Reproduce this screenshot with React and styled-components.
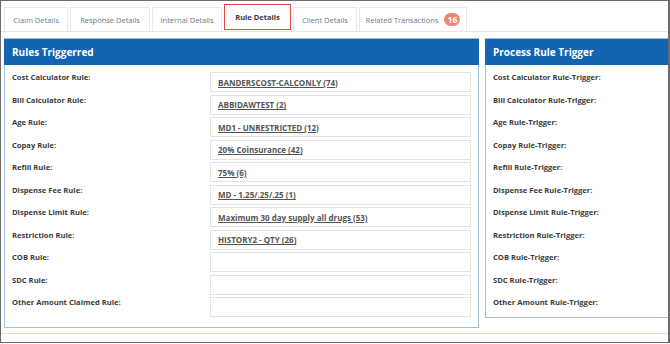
import React from "react";
import styled, { createGlobalStyle } from "styled-components";

const rules = [
  { label: "Cost Calculator Rule:", value: "BANDERSCOST-CALCONLY (74)" },
  { label: "Bill Calculator Rule:", value: "ABBIDAWTEST (2)" },
  { label: "Age Rule:", value: "MD1 - UNRESTRICTED (12)" },
  { label: "Copay Rule:", value: "20% Coinsurance (42)" },
  { label: "Refill Rule:", value: "75% (6)" },
  { label: "Dispense Fee Rule:", value: "MD - 1.25/.25/.25 (1)" },
  { label: "Dispense Limit Rule:", value: "Maximum 30 day supply all drugs (53)" },
  { label: "Restriction Rule:", value: "HISTORY2 - QTY (26)" },
  { label: "COB Rule:", value: "" },
  { label: "SDC Rule:", value: "" },
  { label: "Other Amount Claimed Rule:", value: "" },
];

const triggers = [
  "Cost Calculator Rule-Trigger:",
  "Bill Calculator Rule-Trigger:",
  "Age Rule-Trigger:",
  "Copay Rule-Trigger:",
  "Refill Rule-Trigger:",
  "Dispense Fee Rule-Trigger:",
  "Dispense Limit Rule-Trigger:",
  "Restriction Rule-Trigger:",
  "COB Rule-Trigger:",
  "SDC Rule-Trigger:",
  "Other Amount Rule-Trigger:",
];

const tabs = [
  { name: "Claim Details", width: 64 },
  { name: "Response Details", width: 80 },
  { name: "Internal Details", width: 70 },
  { name: "Rule Details", width: 67, active: true },
  { name: "Client Details", width: 64 },
  { name: "Related Transactions", width: 108, badge: 16 },
];

const App = () => (
  <>
    <GlobalStyle />
    <Frame>
      <TabBar>
        {tabs.map((tab) => (
          <Tab key={tab.name} $active={tab.active} $width={tab.width}>
            {tab.name}
            {tab.badge && <Badge>{tab.badge}</Badge>}
          </Tab>
        ))}
      </TabBar>
      <Panels>
        <Panel $width="475px">
          <PanelHeader>Rules Triggerred</PanelHeader>
          <PanelBody>
            {rules.map((rule) => (
              <Row key={rule.label}>
                <Label>{rule.label}</Label>
                <ValueBox>{rule.value && <ValueLink>{rule.value}</ValueLink>}</ValueBox>
              </Row>
            ))}
          </PanelBody>
        </Panel>
        <Panel $width="200px">
          <PanelHeader>Process Rule Trigger</PanelHeader>
          <PanelBody $short>
            {triggers.map((t) => (
              <Row key={t}>
                <Label>{t}</Label>
              </Row>
            ))}
          </PanelBody>
        </Panel>
      </Panels>
      <FooterLine />
    </Frame>
  </>
);

//CSS

const GlobalStyle = createGlobalStyle`
  body {
    margin: 0;
    background: #fff;
    font-family: "Open Sans", "Liberation Sans", sans-serif;
  }
`;

const Frame = styled.div`
  width: 670px;
  height: 343px;
  box-sizing: border-box;
  border: 1px solid #6b6b6b;
  border-right-width: 2px;
  overflow: hidden;
  background: #fff;
  display: flex;
  flex-direction: column;
`;

const TabBar = styled.div`
  display: flex;
  align-items: flex-end;
  gap: 2px;
  height: 30px;
  padding-left: 3px;
  border-bottom: 1px solid #e6e6e6;
`;

const Tab = styled.div`
  display: flex;
  align-items: center;
  justify-content: center;
  flex: none;
  box-sizing: border-box;
  width: ${(props) => props.$width}px;
  height: ${(props) => (props.$active ? "26px" : "24px")};
  border: 1px solid ${(props) => (props.$active ? "#e8463f" : "#e8e8e8")};
  border-bottom: ${(props) => (props.$active ? "1px solid #e8463f" : "none")};
  margin-bottom: ${(props) => (props.$active ? "1px" : "0")};
  font-size: 7.5px;
  font-weight: ${(props) => (props.$active ? 700 : 400)};
  color: ${(props) => (props.$active ? "#3a3a3a" : "#6a7a92")};
  white-space: nowrap;
  background: #fff;
`;

const Badge = styled.span`
  margin-left: 6px;
  padding: 0 3px;
  min-width: 10px;
  height: 13px;
  border-radius: 7px;
  background: #f28472;
  color: #fff;
  font-size: 8.5px;
  font-weight: 700;
  line-height: 13px;
  text-align: center;
`;

const Panels = styled.div`
  display: flex;
  align-items: flex-start;
  gap: 6px;
  padding: 6px 0 0 3px;
  flex: 1;
`;

const Panel = styled.div`
  flex: none;
  width: ${(props) => props.$width};
`;

const PanelHeader = styled.div`
  height: 27px;
  box-sizing: border-box;
  border-top: 1px solid #9cbbdb;
  background: #1564b2;
  color: #fff;
  font-size: 10px;
  font-weight: 700;
  padding-left: 8px;
  display: flex;
  align-items: center;
`;

const PanelBody = styled.div`
  border: 1px solid #a4c0dd;
  border-top: none;
  padding: 7px 7px ${(props) => (props.$short ? "0" : "10px")} 7px;
  display: flex;
  flex-direction: column;
  gap: 2.5px;
`;

const Row = styled.div`
  display: flex;
  justify-content: space-between;
  align-items: flex-start;
  height: 20px;
`;

const Label = styled.div`
  font-size: 7.6px;
  font-weight: 700;
  color: #3c3c3c;
  line-height: 11px;
`;

const ValueBox = styled.div`
  width: 261px;
  height: 20px;
  box-sizing: border-box;
  border: 1px solid #e3e3e3;
  padding-left: 7px;
  display: flex;
  align-items: center;
`;

const ValueLink = styled.span`
  font-size: 8px;
  font-weight: 700;
  color: #555;
  text-decoration: underline;
`;

const FooterLine = styled.div`
  height: 1px;
  background: #fbd8bd;
  margin-bottom: 8px;
`;

export default App;
